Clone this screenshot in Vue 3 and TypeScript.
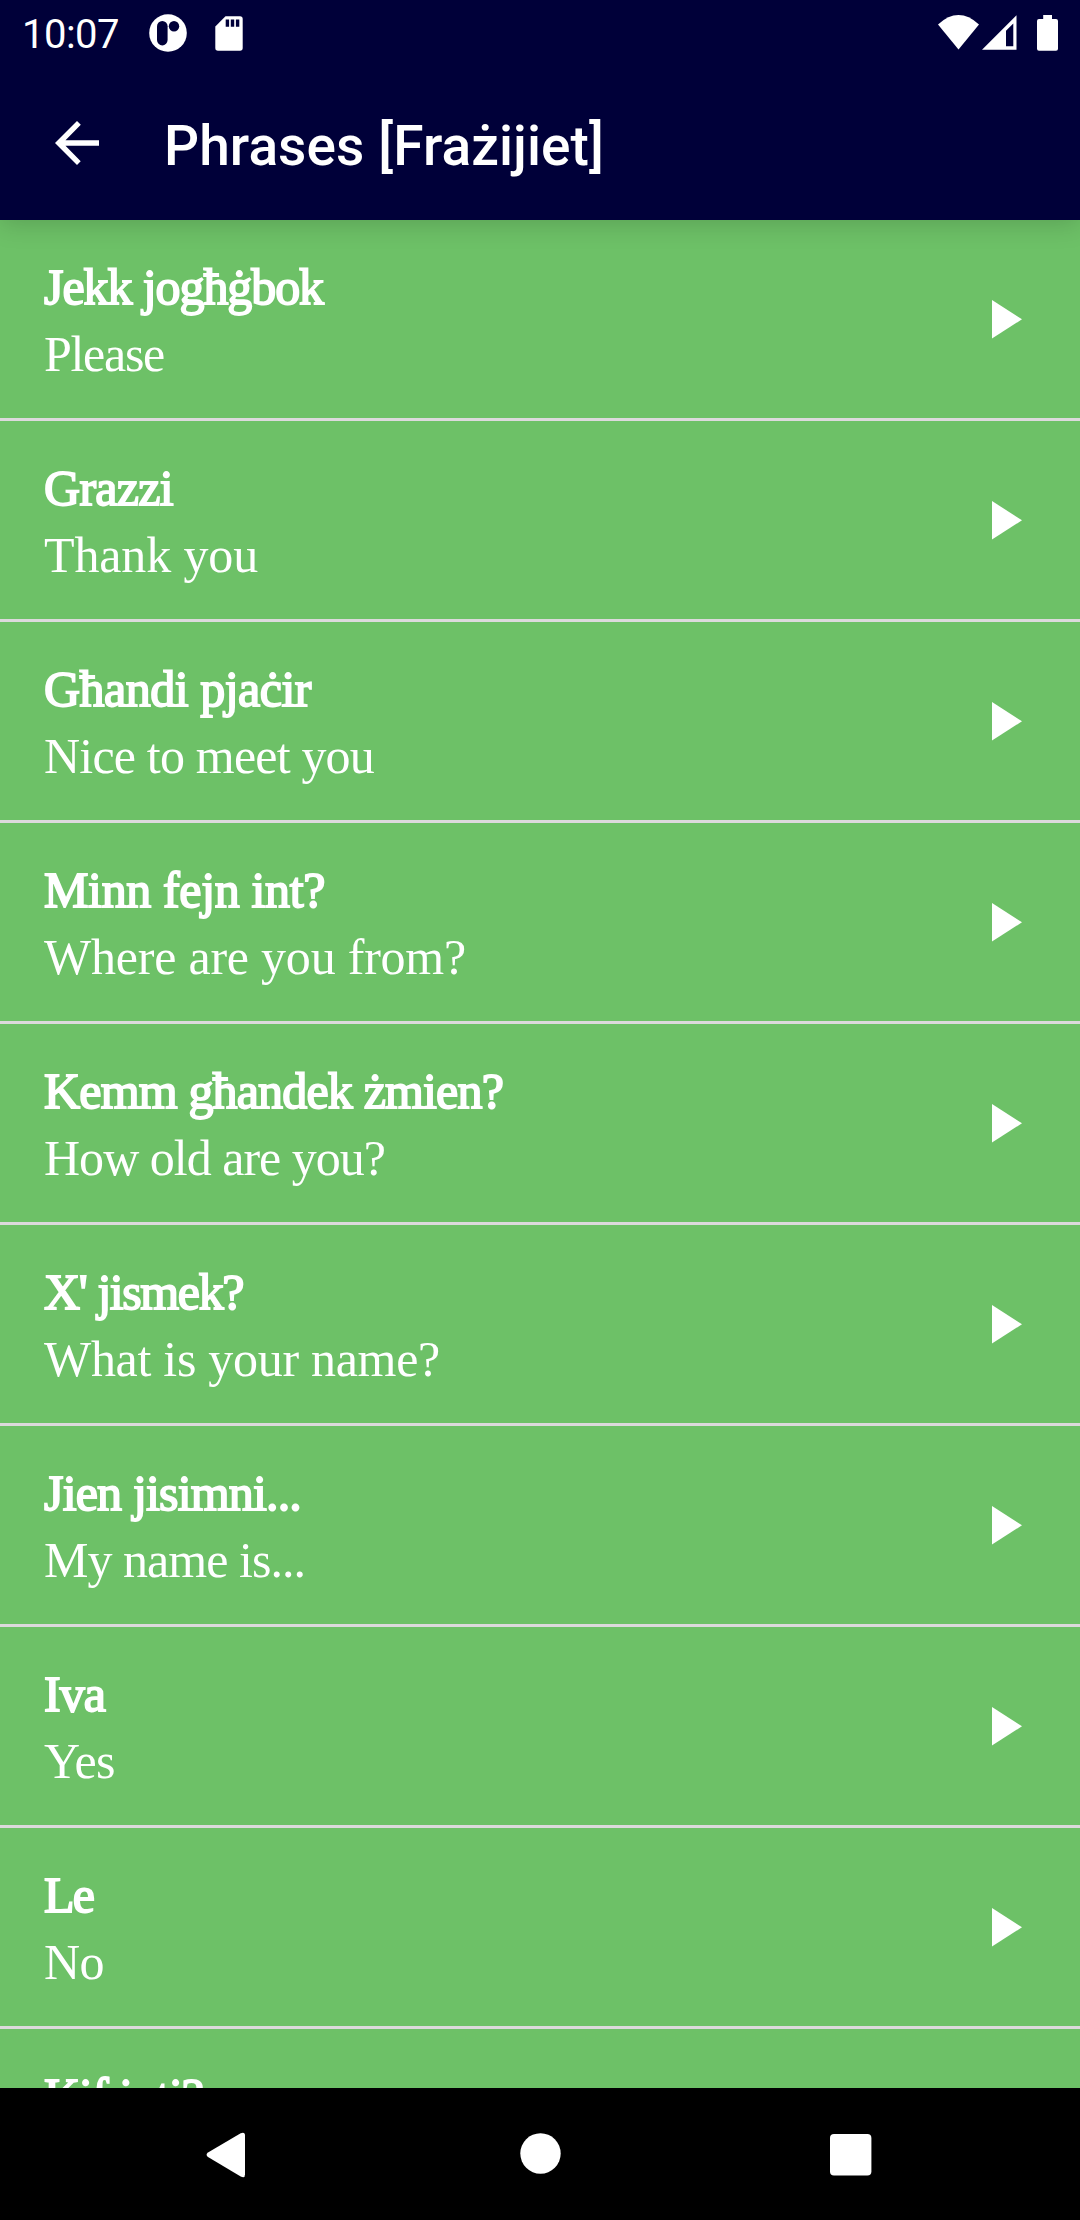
<script setup lang="ts">
interface Line {
  text: string
  width: number
}
interface Phrase {
  maltese: Line
  english?: Line
}

const phrases: Phrase[] = [
  { maltese: { text: 'Jekk jogħġbok', width: 279 }, english: { text: 'Please', width: 120 } },
  { maltese: { text: 'Grazzi', width: 129 }, english: { text: 'Thank you', width: 214 } },
  { maltese: { text: 'Għandi pjaċir', width: 267 }, english: { text: 'Nice to meet you', width: 330 } },
  { maltese: { text: 'Minn fejn int?', width: 281 }, english: { text: 'Where are you from?', width: 422 } },
  { maltese: { text: 'Kemm għandek żmien?', width: 459 }, english: { text: 'How old are you?', width: 341 } },
  { maltese: { text: "X' jismek?", width: 199 }, english: { text: 'What is your name?', width: 396 } },
  { maltese: { text: 'Jien jisimni...', width: 257 }, english: { text: 'My name is...', width: 261 } },
  { maltese: { text: 'Iva', width: 61 }, english: { text: 'Yes', width: 71 } },
  { maltese: { text: 'Le', width: 49 }, english: { text: 'No', width: 60 } },
  { maltese: { text: 'Kif inti?', width: 159 } },
]

// Tracks a line of text out or in until it fills the given width.
const vFit = {
  mounted(el: HTMLElement, binding: { value: number }) {
    const natural = el.getBoundingClientRect().width
    const count = (el.textContent ?? '').length
    el.style.letterSpacing = `${(binding.value - natural) / count}px`
  },
}
</script>

<template>
  <div class="screen">
    <header class="top">
      <div class="status">
        <span class="clock"><span v-fit="97">10:07</span></span>
        <svg class="app-icon" width="38" height="38" viewBox="0 0 38 38">
          <circle cx="19" cy="19" r="18.8" fill="#fff" />
          <rect x="8" y="7" width="10.6" height="24.4" rx="5.3" fill="#000039" />
          <circle cx="25" cy="12.3" r="5.2" fill="#000039" />
        </svg>
        <svg class="sd-icon" width="28" height="35" viewBox="0 0 28 35">
          <path d="M10.5 .3H25a2.7 2.7 0 0 1 2.7 2.7v29a2.7 2.7 0 0 1-2.7 2.7H3A2.7 2.7 0 0 1 .3 32V10.5Z" fill="#fff" />
          <path d="M10.7 3.5h3.4v7.3h-3.4zM15.8 3.5h3.4v7.3h-3.4zM20.9 3.5h3.4v7.3h-3.4z" fill="#000039" />
        </svg>
        <span class="spacer"></span>
        <svg class="wifi" width="42" height="35" viewBox="0 0 42 35">
          <path d="M0 9.5Q20.5-9.3 41 9.5L20.5 34.5Z" fill="#fff" />
        </svg>
        <svg class="signal" width="35" height="35" viewBox="0 0 35 35">
          <path fill-rule="evenodd" d="M34.5 .3V34.7H0ZM31.3 8.5L24 15.8V31.2H31.3Z" fill="#fff" />
        </svg>
        <svg class="battery" width="21" height="36" viewBox="0 0 21 36">
          <path d="M6.2 0H15V4H19a2 2 0 0 1 2 2V33.7a2 2 0 0 1-2 2H2a2 2 0 0 1-2-2V6A2 2 0 0 1 2 4H6.2Z" fill="#fff" />
        </svg>
      </div>
      <div class="bar">
        <svg class="back" width="44" height="44" viewBox="0 0 44 44">
          <path d="M44 19.3H10.5L25.8 3.7 22 0 0 22 22 44l3.7-3.7L10.5 24.8H44Z" fill="#fff" />
        </svg>
        <h1 class="title"><span v-fit="440">Phrases [Frażijiet]</span></h1>
      </div>
    </header>

    <main class="list">
      <div v-for="p in phrases" :key="p.maltese.text" class="row">
        <div class="texts">
          <div class="line maltese"><span v-fit="p.maltese.width">{{ p.maltese.text }}</span></div>
          <div class="line"><span v-if="p.english" v-fit="p.english.width">{{ p.english.text }}</span></div>
        </div>
        <svg width="30" height="39" viewBox="0 0 30 39">
          <path d="M0 0L30 19.3 0 38.5Z" fill="#fff" />
        </svg>
      </div>
    </main>

    <nav class="nav">
      <svg width="40" height="46" viewBox="0 0 40 46">
        <path d="M34.7 1.2Q39 -.6 39 3.5V42.5Q39 46.6 34.7 44.4L2 25Q-.8 22.7 2 20.5Z" fill="#fff" />
      </svg>
      <svg class="home" width="41" height="41" viewBox="0 0 41 41">
        <circle cx="20.5" cy="20.5" r="20.2" fill="#fff" />
      </svg>
      <svg class="recent" width="42" height="42" viewBox="0 0 42 42">
        <rect width="41.4" height="41.6" rx="4" fill="#fff" />
      </svg>
    </nav>
  </div>
</template>

<style>
body {
  margin: 0;
  overflow: hidden;
}
</style>

<style scoped>
.screen {
  width: 1080px;
  height: 2220px;
  display: flex;
  flex-direction: column;
  overflow: hidden;
  background: #000;
  color: #fff;
}
svg {
  display: block;
  flex: none;
}
.top {
  position: relative;
  z-index: 1;
  flex: none;
  height: 220px;
  background: #000039;
  box-shadow: 0 4px 24px rgba(0, 0, 0, 0.17);
  font-family: Roboto, sans-serif;
}
.status {
  height: 66px;
  display: flex;
  align-items: flex-start;
  box-sizing: border-box;
  padding: 0 22px;
}
.clock {
  width: 127px;
  font-size: 40px;
  line-height: 69px;
  white-space: nowrap;
}
.app-icon {
  margin-top: 14px;
}
.sd-icon {
  margin: 16px 0 0 28px;
}
.spacer {
  flex: 1;
}
.wifi {
  margin: 15px 2px 0 0;
}
.signal {
  margin: 15px 20px 0 0;
}
.battery {
  margin-top: 15px;
}
.bar {
  height: 154px;
  display: flex;
  align-items: flex-start;
  padding-left: 55px;
}
.back {
  margin-top: 55px;
}
.title {
  margin: 45px 0 0 65px;
  font-size: 55px;
  font-weight: 500;
  line-height: 70px;
  white-space: nowrap;
}
.list {
  flex: none;
  height: 1868px;
  overflow: hidden;
  background: #6dc167;
}
.row {
  display: flex;
  align-items: center;
  justify-content: space-between;
  box-sizing: border-box;
  height: 201px;
  padding: 0 58px 0 44px;
  border-bottom: 3px solid #dcdadc;
}
.texts {
  padding-top: 4px;
  font-family: "Liberation Serif", serif;
  font-size: 50px;
}
.line {
  height: 67px;
  line-height: 67px;
  white-space: nowrap;
}
.maltese {
  -webkit-text-stroke: 1.8px #fff;
}
.nav {
  flex: none;
  height: 132px;
  display: flex;
  align-items: flex-start;
  box-sizing: border-box;
  padding: 44px 0 0 206px;
}
.home {
  margin: 1px 0 0 273.5px;
}
.recent {
  margin: 2px 0 0 269.5px;
}
</style>
